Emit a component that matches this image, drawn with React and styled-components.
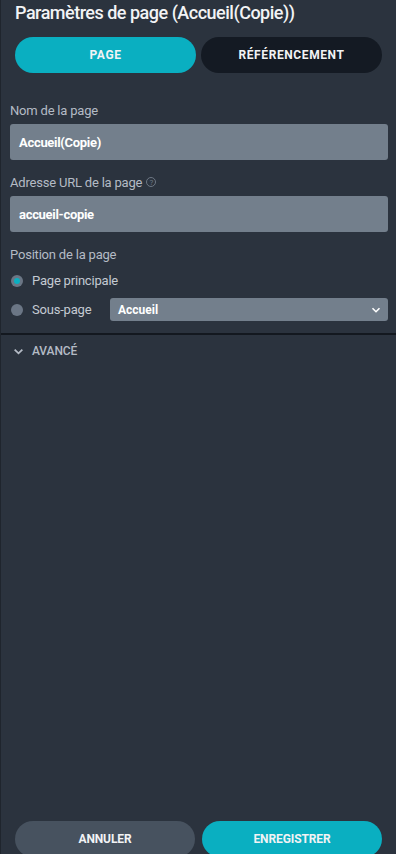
import React, { useState } from "react";
import styled, { createGlobalStyle } from "styled-components";

const GlobalStyle = createGlobalStyle`
  html, body {
    margin: 0;
    padding: 0;
    background: #2b333e;
  }
  * {
    box-sizing: border-box;
  }
`;

export const StyledPanel = styled.div`
  width: 396px;
  height: 854px;
  background: #2b333e;
  border-left: 1px solid #1f252d;
  display: flex;
  flex-direction: column;
  font-family: Roboto, "Liberation Sans", sans-serif;
  overflow: hidden;
`;
export const StyledTitle = styled.h1`
  margin: 0;
  padding: 2px 0 0 14px;
  height: 31px;
  font-size: 18px;
  font-weight: 500;
  color: #f2f3f5;
  letter-spacing: -0.5px;
`;
export const StyledTabs = styled.div`
  display: grid;
  grid-template-columns: 1fr 1fr;
  gap: 5px;
  padding: 6px 14px 0 14px;
`;
export const StyledTab = styled.button`
  height: 36px;
  border: none;
  border-radius: 18px;
  background: ${({ $active }) => ($active ? "#0aafc1" : "#141a23")};
  color: #f2f3f5;
  font-family: inherit;
  font-size: 12px;
  font-weight: 700;
  letter-spacing: 0.6px;
  cursor: pointer;
`;
export const StyledForm = styled.div`
  display: flex;
  flex-direction: column;
  padding: 28px 8px 0 9px;
`;
export const StyledLabel = styled.div`
  display: flex;
  align-items: center;
  gap: 4px;
  font-size: 13px;
  color: #b4bbc5;
  letter-spacing: -0.2px;
  height: 18px;
  margin-bottom: ${({ $tight }) => ($tight ? 6 : 5)}px;
`;
export const StyledInput = styled.div`
  height: 36px;
  border-radius: 3px;
  background: #737f8c;
  color: #ffffff;
  font-size: 13px;
  font-weight: 700;
  letter-spacing: -0.3px;
  display: flex;
  align-items: center;
  padding-left: 9px;
  margin-bottom: 13px;
`;
export const StyledHelp = styled.span`
  width: 10px;
  height: 10px;
  border: 1px solid #6d7784;
  border-radius: 50%;
  color: #6d7784;
  font-size: 8px;
  display: inline-flex;
  align-items: center;
  justify-content: center;
`;
export const StyledRadioRow = styled.div`
  display: flex;
  align-items: center;
  height: 23px;
  margin-top: ${({ $gap }) => $gap || 0}px;
`;
export const StyledRadio = styled.span`
  flex: none;
  width: 12px;
  height: 12px;
  border-radius: 50%;
  background: #6b7685;
  margin-left: 1px;
  margin-right: 9px;
  display: inline-flex;
  align-items: center;
  justify-content: center;
  &::after {
    content: "";
    width: 6px;
    height: 6px;
    border-radius: 50%;
    background: ${({ $checked }) => ($checked ? "#0aafc1" : "transparent")};
  }
`;
export const StyledRadioText = styled.span`
  flex: none;
  font-size: 13px;
  color: #c4cad2;
  letter-spacing: -0.2px;
  white-space: nowrap;
  width: ${({ $width }) => ($width ? `${$width}px` : "auto")};
`;
export const StyledSelect = styled.div`
  flex: 1;
  height: 23px;
  border-radius: 3px;
  background: #737f8c;
  color: #ffffff;
  font-size: 12px;
  font-weight: 700;
  display: flex;
  align-items: center;
  justify-content: space-between;
  padding: 0 7px 0 8px;
`;
export const StyledDivider = styled.hr`
  margin: 12px 0 0 0;
  border: none;
  border-top: 2px solid #13181f;
`;
export const StyledAdvanced = styled.div`
  display: flex;
  align-items: center;
  gap: 8px;
  padding: 9px 0 0 12px;
  color: #b4bbc5;
  font-size: 12px;
  font-weight: 500;
  letter-spacing: -0.1px;
`;
export const StyledSpacer = styled.div`
  flex: 1;
`;
export const StyledFooter = styled.div`
  display: grid;
  grid-template-columns: 180px 180px;
  gap: 7px;
  padding: 0 14px;
  height: 33px;
`;
export const StyledFooterButton = styled.button`
  height: 36px;
  border: none;
  border-radius: 18px;
  background: ${({ $primary }) => ($primary ? "#0aafc1" : "#47525f")};
  color: #f2f3f5;
  font-family: inherit;
  font-size: 12px;
  font-weight: 700;
  letter-spacing: -0.1px;
`;

const Chevron = ({ size = 10, color = "#ffffff" }) => (
  <svg width={size} height={size} viewBox="0 0 10 10">
    <path d="M1.5 3.2 L5 6.7 L8.5 3.2" fill="none" stroke={color} strokeWidth="1.6" />
  </svg>
);

export default function App() {
  const [tab, setTab] = useState("page");
  return (
    <>
      <GlobalStyle />
      <StyledPanel>
        <StyledTitle>Paramètres de page (Accueil(Copie))</StyledTitle>
        <StyledTabs>
          <StyledTab $active={tab === "page"} onClick={() => setTab("page")}>PAGE</StyledTab>
          <StyledTab $active={tab === "seo"} onClick={() => setTab("seo")}>RÉFÉRENCEMENT</StyledTab>
        </StyledTabs>
        <StyledForm>
          <StyledLabel>Nom de la page</StyledLabel>
          <StyledInput>Accueil(Copie)</StyledInput>
          <StyledLabel>
            Adresse URL de la page <StyledHelp>?</StyledHelp>
          </StyledLabel>
          <StyledInput>accueil-copie</StyledInput>
          <StyledLabel $tight>Position de la page</StyledLabel>
          <StyledRadioRow>
            <StyledRadio $checked />
            <StyledRadioText>Page principale</StyledRadioText>
          </StyledRadioRow>
          <StyledRadioRow $gap={6}>
            <StyledRadio />
            <StyledRadioText $width={78}>Sous-page</StyledRadioText>
            <StyledSelect>
              Accueil
              <Chevron />
            </StyledSelect>
          </StyledRadioRow>
        </StyledForm>
        <StyledDivider />
        <StyledAdvanced>
          <Chevron size={11} color="#b4bbc5" />
          AVANCÉ
        </StyledAdvanced>
        <StyledSpacer />
        <StyledFooter>
          <StyledFooterButton>ANNULER</StyledFooterButton>
          <StyledFooterButton $primary>ENREGISTRER</StyledFooterButton>
        </StyledFooter>
      </StyledPanel>
    </>
  );
}
